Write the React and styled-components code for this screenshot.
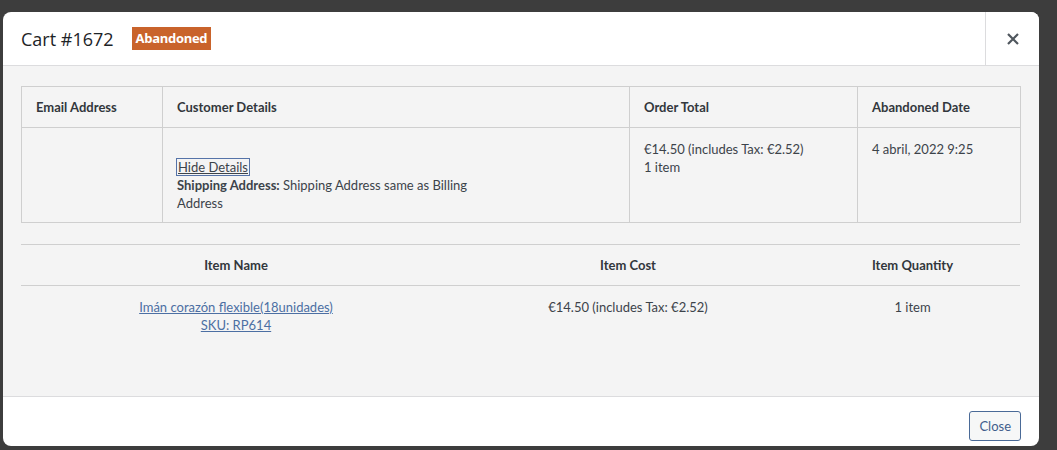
import React from "react";
import styled, { createGlobalStyle } from "styled-components";

const GlobalStyle = createGlobalStyle`
  html, body {
    margin: 0;
    padding: 0;
    background: #3d3d3d;
    font-family: Lato, "Open Sans", sans-serif;
  }
`;

const Backdrop = styled.div`
  height: 450px;
  box-sizing: border-box;
  padding: 12px 18px 4px 3px;
  display: flex;
`;

const Modal = styled.div`
  flex: 1;
  display: flex;
  flex-direction: column;
  background: #fff;
  border-radius: 8px;
  overflow: hidden;
`;

const Header = styled.div`
  height: 54px;
  box-sizing: border-box;
  display: flex;
  align-items: center;
  border-bottom: 1px solid #dcdcde;
  padding-left: 18px;
`;

const Title = styled.h1`
  margin: 0;
  font-size: 18px;
  font-weight: 400;
  color: #1d2327;
  font-family: "Open Sans", sans-serif;
`;

const Badge = styled.span`
  margin-left: 18px;
  background: #c9632b;
  color: #fff;
  font-weight: 700;
  font-size: 13px;
  padding: 3px 4px;
  line-height: 17px;
  font-family: "Open Sans", sans-serif;
  letter-spacing: -0.3px;
`;

const CloseX = styled.button`
  margin-left: auto;
  width: 54px;
  height: 100%;
  border: none;
  border-left: 1px solid #dcdcde;
  background: #fff;
  display: flex;
  align-items: center;
  justify-content: center;
  padding: 0;
`;

const Body = styled.div`
  flex: 1;
  background: #f4f4f4;
  padding: 20px 19px 0 18px;
  display: flex;
  flex-direction: column;
  gap: 21px;
  font-size: 13px;
  color: #3c434a;
`;

const CartTable = styled.table`
  border-collapse: collapse;
  width: 100%;
  table-layout: fixed;
  font-size: 13px;
  line-height: 18px;
`;

const Th = styled.th`
  height: 41px;
  box-sizing: border-box;
  text-align: ${(p) => p.$align || "left"};
  padding: 0 ${(p) => (p.$align === "center" ? 0 : 14)}px;
  font-weight: 700;
  color: #32373c;
  border: ${(p) => (p.$grid ? "1px solid #cfcfcf" : "none")};
  border-top: 1px solid #cfcfcf;
  border-bottom: 1px solid #cfcfcf;
`;

const Td = styled.td`
  vertical-align: top;
  text-align: ${(p) => p.$align || "left"};
  padding: ${(p) => (p.$grid ? "12px 14px 10px" : "12px 0")};
  border: ${(p) => (p.$grid ? "1px solid #cfcfcf" : "none")};
  color: #3c434a;
`;

const Spacer = styled.div`
  height: 18px;
`;

const Toggle = styled.a`
  color: #3c434a;
  text-decoration: underline;
  outline: 1px solid #5573a8;
  outline-offset: 0px;
  padding: 0 1px;
`;

const ItemLink = styled.a`
  color: #4c6fa3;
  text-decoration: underline;
`;

const Footer = styled.div`
  height: 50px;
  box-sizing: border-box;
  border-top: 1px solid #dcdcde;
  display: flex;
  align-items: flex-end;
  justify-content: flex-end;
  padding: 0 18px 5px 0;
`;

const CloseButton = styled.button`
  height: 30px;
  padding: 0 9px;
  border: 1px solid #4a6a97;
  border-radius: 3px;
  background: #f6f7f7;
  color: #3f5e8c;
  font-size: 13px;
  font-family: Lato, "Open Sans", sans-serif;
`;

export default function App() {
  return (
    <>
      <GlobalStyle />
      <Backdrop>
        <Modal>
          <Header>
            <Title>Cart #1672</Title>
            <Badge>Abandoned</Badge>
            <CloseX aria-label="Close">
              <svg width="12" height="12" viewBox="0 0 12 12">
                <path d="M1 1L11 11M11 1L1 11" stroke="#50575e" strokeWidth="2.2" />
              </svg>
            </CloseX>
          </Header>
          <Body>
            <CartTable>
              <colgroup>
                <col style={{ width: 141 }} />
                <col style={{ width: 467 }} />
                <col style={{ width: 228 }} />
                <col style={{ width: 163 }} />
              </colgroup>
              <thead>
                <tr>
                  <Th $grid>Email Address</Th>
                  <Th $grid>Customer Details</Th>
                  <Th $grid>Order Total</Th>
                  <Th $grid>Abandoned Date</Th>
                </tr>
              </thead>
              <tbody>
                <tr>
                  <Td $grid></Td>
                  <Td $grid>
                    <Spacer />
                    <Toggle href="#">Hide Details</Toggle>
                    <br />
                    <b>Shipping Address:</b> Shipping Address same as Billing
                    <br />
                    Address
                  </Td>
                  <Td $grid>
                    €14.50 (includes Tax: €2.52)
                    <br />1 item
                  </Td>
                  <Td $grid>4 abril, 2022 9:25</Td>
                </tr>
              </tbody>
            </CartTable>
            <CartTable>
              <colgroup>
                <col style={{ width: 430 }} />
                <col style={{ width: 354 }} />
                <col style={{ width: 215 }} />
              </colgroup>
              <thead>
                <tr>
                  <Th $align="center">Item Name</Th>
                  <Th $align="center">Item Cost</Th>
                  <Th $align="center">Item Quantity</Th>
                </tr>
              </thead>
              <tbody>
                <tr>
                  <Td $align="center">
                    <ItemLink href="#">Imán corazón flexible(18unidades)</ItemLink>
                    <br />
                    <ItemLink href="#">SKU: RP614</ItemLink>
                  </Td>
                  <Td $align="center">€14.50 (includes Tax: €2.52)</Td>
                  <Td $align="center">1 item</Td>
                </tr>
              </tbody>
            </CartTable>
          </Body>
          <Footer>
            <CloseButton>Close</CloseButton>
          </Footer>
        </Modal>
      </Backdrop>
    </>
  );
}
